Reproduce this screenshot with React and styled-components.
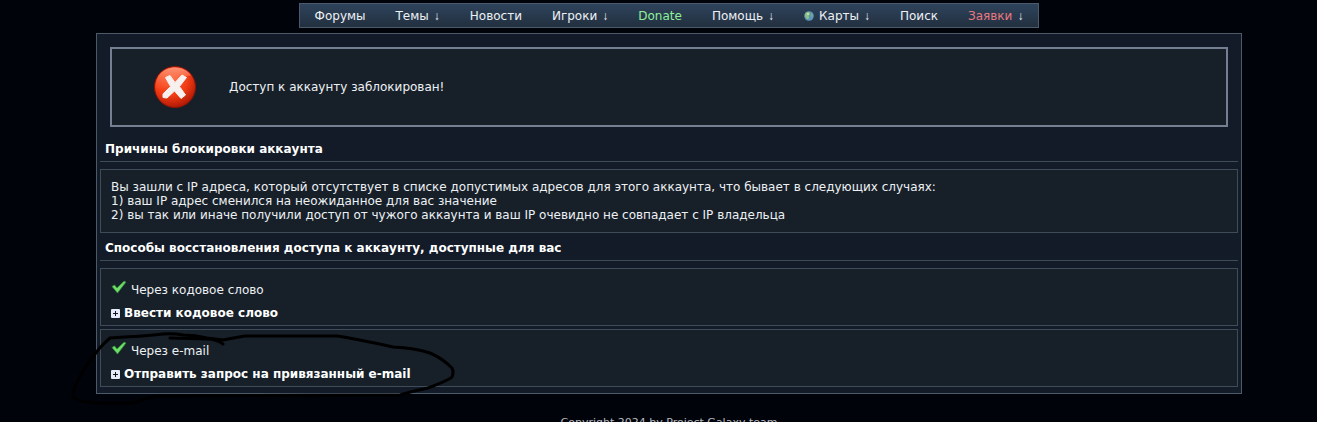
import React from 'react'
import styled, { createGlobalStyle } from 'styled-components'

const navItems = [
    { title: 'Форумы' },
    { title: 'Темы', menu: true },
    { title: 'Новости' },
    { title: 'Игроки', menu: true },
    { title: 'Donate', color: '#8ff09a' },
    { title: 'Помощь', menu: true },
    { title: 'Карты', menu: true, globe: true },
    { title: 'Поиск' },
    { title: 'Заявки', menu: true, color: '#e87880' },
]

const methods = [
    { title: 'Через кодовое слово', action: 'Ввести кодовое слово' },
    { title: 'Через e-mail', action: 'Отправить запрос на привязанный e-mail' },
]

function GlobeIcon() {
    return (
        <Globe viewBox="0 0 10 10" aria-hidden="true">
            <circle cx="5" cy="5" r="4.8" fill="#5b95b8" />
            <path d="M2 1.6 5 .8 6 3 4.6 5 5.2 7 3.6 8.6 1.4 6 .9 4Z" fill="#8fc07c" />
            <path d="M7 2 9 4 8.4 6.6 6.8 5Z" fill="#77a98c" />
            <circle cx="4" cy="3" r="1" fill="#d0e6b8" />
        </Globe>
    )
}

function ErrorIcon() {
    return (
        <ErrorSvg viewBox="0 0 44 44" aria-hidden="true">
            <defs>
                <radialGradient id="ball" cx="0.4" cy="0.3" r="0.75">
                    <stop offset="0" stopColor="#ff6038" />
                    <stop offset="0.55" stopColor="#f23c14" />
                    <stop offset="1" stopColor="#a81404" />
                </radialGradient>
                <linearGradient id="shine" x1="0" y1="0" x2="0" y2="1">
                    <stop offset="0" stopColor="#ffb59c" stopOpacity="0.7" />
                    <stop offset="1" stopColor="#ff6a40" stopOpacity="0.1" />
                </linearGradient>
            </defs>
            <circle cx="22" cy="22" r="20.5" fill="url(#ball)" stroke="#8c1406" strokeWidth="1" />
            <path d="M3 24C1 11 11 2.5 22 2.5c7 0 13 3 16 8-8 0-13 4-18 8S10 24 3 24Z" fill="url(#shine)" />
            <path
                d="M12.5 12.5 17 10.5 22 17.5 29 10 33.5 12.5 26.5 21.5 32.5 30 28 33.5 21.5 26 14 33 10 32.5 10 29 17.5 21.5Z"
                fill="#f6f1ef"
                stroke="#f6f1ef"
                strokeWidth="1"
                strokeLinejoin="round"
            />
        </ErrorSvg>
    )
}

function CheckIcon() {
    return (
        <CheckSvg viewBox="0 0 16 16" aria-hidden="true">
            <path d="M1 7.5 3.5 6 6 9 13 2.2 15 3 6.5 14Z" fill="#6fdc6a" stroke="#2f8a38" strokeWidth="0.8" />
        </CheckSvg>
    )
}

function PlusIcon() {
    return (
        <PlusSvg viewBox="0 0 9 9" aria-hidden="true">
            <rect width="9" height="9" rx="1" fill="#e6ebfa" />
            <path d="M2 4.5h5M4.5 2v5" stroke="#10141c" strokeWidth="1" />
        </PlusSvg>
    )
}

function App() {
    return (
        <Page>
            <GlobalStyle />
            <Nav>
                {navItems.map((item) => (
                    <NavItem key={item.title}>
                        {item.globe && <GlobeIcon />}
                        <NavLink href="#" $color={item.color}>{item.title}</NavLink>
                        {item.menu && <Arrow>↓</Arrow>}
                    </NavItem>
                ))}
            </Nav>
            <Panel>
                <Alert role="alert">
                    <ErrorIcon />
                    Доступ к аккаунту заблокирован!
                </Alert>
                <Heading>Причины блокировки аккаунта</Heading>
                <Reasons>
                    Вы зашли с IP адреса, который отсутствует в списке допустимых адресов для этого аккаунта, что бывает в следующих случаях:<br />
                    1) ваш IP адрес сменился на неожиданное для вас значение<br />
                    2) вы так или иначе получили доступ от чужого аккаунта и ваш IP очевидно не совпадает с IP владельца
                </Reasons>
                <Heading>Способы восстановления доступа к аккаунту, доступные для вас</Heading>
                <Methods>
                    {methods.map((method) => (
                        <Method key={method.title}>
                            <MethodTitle>
                                <CheckIcon />
                                <span>{method.title}</span>
                            </MethodTitle>
                            <MethodButton type="button">
                                <PlusIcon />
                                {method.action}
                            </MethodButton>
                        </Method>
                    ))}
                </Methods>
            </Panel>
            <Footer>Copyright 2024 by Project Galaxy team</Footer>
            <Marker viewBox="0 0 390 80" aria-hidden="true">
                <path d="M158 14Q153 10 145 9L105 8" />
                <path d="M118 5Q108 3 98 4C80 6 62 7 45 8Q39 13 33 20C29 26 25 30 20 38Q11 52 8 63 7 68 10 68 16 72 22 72 35 74 48 73 60 74 72 72 82 67 95 66L335 65Q348 61 363 58 384 50 387 47 389 42 387 38 377 28 365 23 350 18 328 17 292 9 272 6L180 6Q168 8 158 10 150 9 142 8 130 5 118 5" />
            </Marker>
        </Page>
    )
}

export default App

const GlobalStyle = createGlobalStyle`
body {
    margin: 0;
    background-color: #01030b;
    color: #eef1f4;
    font-family: "DejaVu Sans", Verdana, sans-serif;
    font-size: 12px;
    line-height: 14px;
}
`

const Page = styled.div`
position: relative;
display: flex;
flex-direction: column;
padding: 3px 75px 0 96px;
`

const Nav = styled.nav`
display: flex;
align-self: center;
border: 1px solid #4b5a69;
background: linear-gradient(#2e435c, #22303f);
`

const NavItem = styled.div`
display: flex;
align-items: center;
gap: 5px;
padding: 5px 15px 4px;
`

const NavLink = styled.a`
color: ${(props) => props.$color || '#eef1f4'};
text-decoration: none;
`

const Arrow = styled.span`
font-family: "Liberation Sans", Arial, sans-serif;
`

const Globe = styled.svg`
width: 10px;
height: 10px;
`

const Panel = styled.main`
margin-top: 5px;
padding: 13px 3px 6px;
border: 1px solid #4b5a69;
background-color: #131a28;
`

const Alert = styled.div`
display: flex;
align-items: center;
gap: 32px;
margin: 0 10px 7px;
padding: 16px 41px;
border: 2px solid #748092;
background-color: #172029;
`

const ErrorSvg = styled.svg`
width: 44px;
height: 44px;
`

const Heading = styled.h2`
margin: 0 0 7px;
padding: 8px 5px 5px;
border-bottom: 1px solid #3e4b58;
color: #ffffff;
font-size: 12px;
line-height: 14px;
`

const Box = styled.div`
border: 1px solid #3e4b58;
background-color: #172029;
`

const Reasons = styled(Box)`
padding: 10px;
`

const Methods = styled.div`
display: flex;
flex-direction: column;
gap: 3px;
`

const Method = styled(Box)`
padding: 10px 10px 5px;
`

const MethodTitle = styled.div`
display: flex;
align-items: flex-start;
gap: 4px;
margin-bottom: 5px;
line-height: 22px;
`

const CheckSvg = styled.svg`
width: 16px;
height: 16px;
`

const MethodButton = styled.button`
display: flex;
align-items: center;
gap: 4px;
padding: 0;
border: 0;
background: none;
color: #ffffff;
font: inherit;
font-weight: bold;
cursor: pointer;
`

const PlusSvg = styled.svg`
width: 9px;
height: 9px;
`

const Footer = styled.footer`
margin-top: 22px;
color: #b4b8be;
font-size: 11px;
text-align: center;
`

const Marker = styled.svg`
position: absolute;
top: 330px;
left: 65px;
width: 390px;
height: 80px;
fill: none;
stroke: #000000;
stroke-width: 3;
stroke-linecap: round;
pointer-events: none;
`
